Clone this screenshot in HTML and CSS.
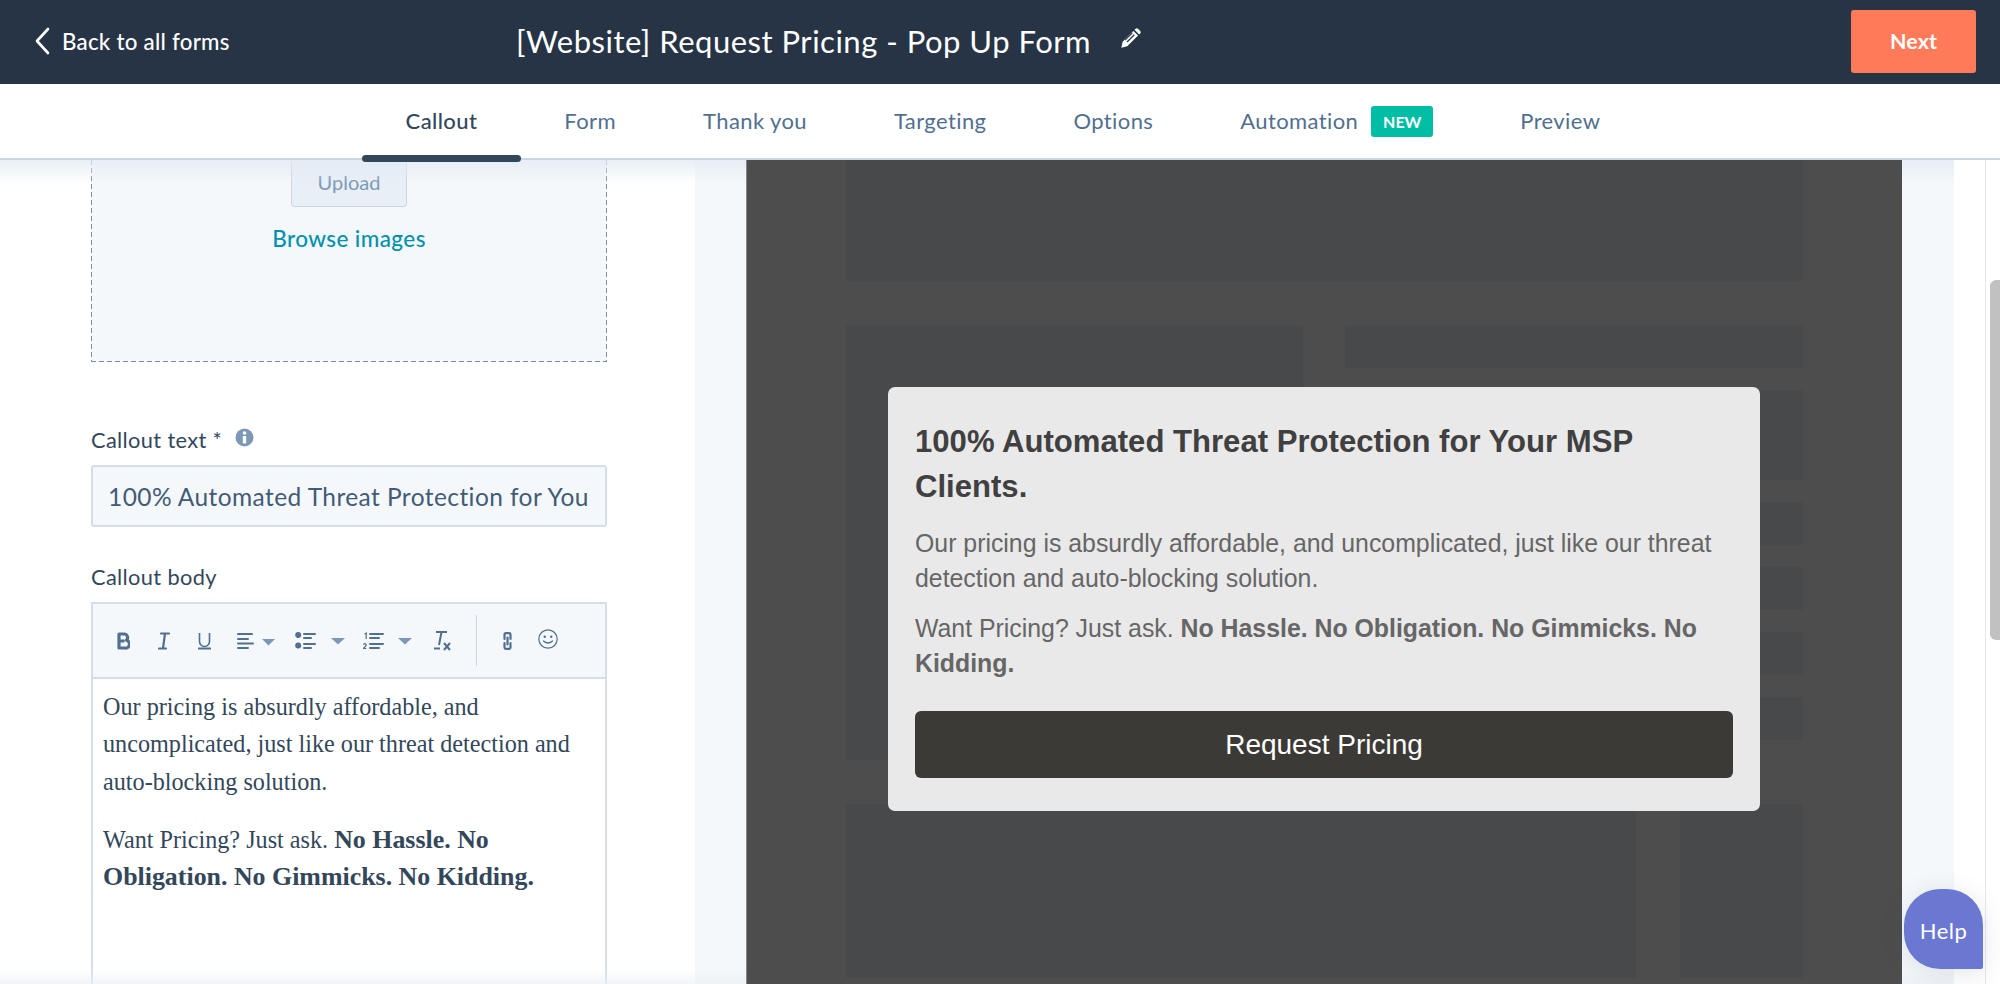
FILE: index.html
```html
<!DOCTYPE html>
<html lang="en">
<head>
<meta charset="utf-8">
<title>Request Pricing - Pop Up Form</title>
<link rel="stylesheet" href="styles.css">
</head>
<body>
<header class="topbar">
  <a class="back">
    <svg class="back-icon" viewBox="0 0 16 28"><path d="M14 2 3 14l11 12" fill="none" stroke="#fff" stroke-width="2.6" stroke-linecap="round" stroke-linejoin="round"/></svg>
    <span>Back to all forms</span>
  </a>
  <div class="title">[Website] Request Pricing - Pop Up Form</div>
  <svg class="pencil" viewBox="0 0 20 20"><path d="M14.2 1.6a1.6 1.6 0 0 1 2.2 0l2 2a1.6 1.6 0 0 1 0 2.2l-1 1-4.2-4.2zM12.2 3.6l4.2 4.2-9.8 9.8-5.4 1.2 1.2-5.4zM5 12.2l6.6-6.6-.8-.8-6.6 6.6zm1.8 1.8 6.6-6.6-.8-.8L6 13.2z" fill="#fff" fill-rule="evenodd"/></svg>
  <button class="next">Next</button>
</header>
<nav class="tabs">
  <a class="tab active">Callout</a>
  <a class="tab">Form</a>
  <a class="tab">Thank you</a>
  <a class="tab">Targeting</a>
  <a class="tab">Options</a>
  <a class="tab">Automation<span class="badge">NEW</span></a>
  <a class="tab">Preview</a>
</nav>
<main class="main">
  <aside class="sidebar">
    <div class="dropzone">
      <div class="upload">Upload</div>
      <a class="browse">Browse images</a>
    </div>
    <label class="label label-text">Callout text *
      <svg class="info" viewBox="0 0 18 18"><circle cx="9" cy="9" r="8.5" fill="#7c98b6"/><circle cx="9" cy="4.8" r="1.7" fill="#fff"/><rect x="7.4" y="7.6" width="3.2" height="7" rx=".6" fill="#fff"/></svg>
    </label>
    <div class="input">100% Automated Threat Protection for You</div>
    <label class="label label-body">Callout body</label>
    <div class="editor">
      <div class="toolbar">
        <svg class="ic w-b" viewBox="0 0 13 18"><path d="M2 2h5a3.6 3.6 0 0 1 2.4 6.3A3.9 3.9 0 0 1 7.6 16H2zM2 9h5.5" fill="none" stroke="#516f90" stroke-width="3.2" stroke-linejoin="round"/></svg>
        <svg class="ic w-i" viewBox="0 0 12 18"><path d="M3 1.5h8M1 16.5h7M7 1.5 5 16.5" fill="none" stroke="#516f90" stroke-width="2.2" stroke-linecap="round"/></svg>
        <svg class="ic w-u" viewBox="0 0 13 18"><path d="M1.5 1v8.5a5 5 0 0 0 10 0V1" fill="none" stroke="#516f90" stroke-width="1.6"/><path d="M.8 16.5h11.4" stroke="#516f90" stroke-width="2.2" stroke-linecap="round"/></svg>
        <svg class="ic w-al" viewBox="0 0 38 18"><path d="M1 2h14M1 7h10M1 11.5h15M1 16h10" stroke="#516f90" stroke-width="2" stroke-linecap="round"/><path d="M25 7h13l-6.500 6.500z" fill="#7c98b6"/></svg>
        <svg class="ic w-bl" viewBox="0 0 50 18"><circle cx="3.200" cy="3" r="3" fill="#516f90"/><circle cx="3.200" cy="13.500" r="3" fill="#516f90"/><path d="M9 2h11M9 6h7M9 12h11M9 16h7" stroke="#516f90" stroke-width="2" stroke-linecap="round"/><path d="M36 6h14l-7 6.500z" fill="#7c98b6"/></svg>
        <svg class="ic w-nl" viewBox="0 0 50 18"><path d="M1.600 2.200 3.200 1v6M.3 12.500q1.200-1.300 2.400-.5.900.8 0 2L.3 16.500h3" fill="none" stroke="#516f90" stroke-width="1.200"/><path d="M7 2h13M7 6h9M7 12h13M7 16h9" stroke="#516f90" stroke-width="2" stroke-linecap="round"/><path d="M35 6h14l-7 6.500z" fill="#7c98b6"/></svg>
        <svg class="ic w-tx" viewBox="0 0 17 22"><path d="M2 2h11M7.500 2 5 15M0 18.500h6M10 13l6 7M16 13l-6 7" fill="none" stroke="#516f90" stroke-width="2"/></svg>
        <span class="divider"></span>
        <svg class="ic w-ln" viewBox="0 0 11 18"><path d="M2.500 7V2.500q0-1.300 1.300-1.300h3.400q1.300 0 1.300 1.300V7M2.500 11v4.500q0 1.300 1.300 1.300h3.400q1.300 0 1.300-1.300V11M5.500 5.500v7" fill="none" stroke="#516f90" stroke-width="2.200" stroke-linecap="round"/></svg>
        <svg class="ic w-sm" viewBox="0 0 20 20"><circle cx="10" cy="10" r="9.200" fill="none" stroke="#516f90" stroke-width="1.200"/><circle cx="6.800" cy="7.800" r="1.200" fill="#516f90"/><circle cx="13.200" cy="7.800" r="1.200" fill="#516f90"/><path d="M5.500 12q4.500 4 9 0" fill="none" stroke="#516f90" stroke-width="1.200" stroke-linecap="round"/></svg>
      </div>
      <div class="editor-body">
        <p>Our pricing is absurdly affordable, and uncomplicated, just like our threat detection and auto-blocking solution.</p>
        <p>Want Pricing? Just ask. <strong>No Hassle. No Obligation. No Gimmicks. No Kidding.</strong></p>
      </div>
    </div>
  </aside>
  <div class="gutter gutter-left"></div>
  <section class="preview">
    <div class="wire wire-top"></div>
    <div class="wire-mid">
      <div class="wire"></div>
      <div class="wire-stack">
        <div class="wire h43"></div>
        <div class="wire h90"></div>
        <div class="wire h43"></div>
        <div class="wire h43"></div>
        <div class="wire h43"></div>
        <div class="wire h43"></div>
      </div>
    </div>
    <div class="wire-bottom">
      <div class="wire"></div>
      <div class="wire"></div>
    </div>
    <div class="popup">
      <h2>100% Automated Threat Protection for Your MSP Clients.</h2>
      <p class="p1">Our pricing is absurdly affordable, and uncomplicated, just like our threat detection and auto-blocking solution.</p>
      <p class="p2">Want Pricing? Just ask. <strong>No Hassle. No Obligation. No Gimmicks. No Kidding.</strong></p>
      <div class="cta">Request Pricing</div>
    </div>
  </section>
  <div class="gutter gutter-right"></div>
  <div class="blank"></div>
  <div class="scrolltrack"><div class="thumb"></div></div>
  <div class="help">Help</div>
</main>
</body>
</html>
```

FILE: styles.css
```css
* { box-sizing: border-box; }
html, body { margin: 0; height: 100%; }
body {
  width: 2000px;
  height: 984px;
  overflow: hidden;
  display: flex;
  flex-direction: column;
  background: #fff;
  color: #33475b;
  font-family: Lato, "Noto Sans", sans-serif;
}
.topbar {
  height: 84px;
  flex: none;
  background: #263445;
  color: #fff;
  display: flex;
  align-items: center;
  padding: 0 0 2px 34px;
}
.back {
  width: 482px;
  display: flex;
  align-items: center;
  font-size: 22.300px;
  font-weight: 500;
  letter-spacing: .25px;
}
.back-icon { width: 16px; height: 28px; margin-right: 12px; }
.title { font-size: 31px; letter-spacing: .5px; white-space: nowrap; }
.pencil { width: 22px; height: 22px; margin: -6px 0 0 29px; }
.next {
  margin-left: auto;
  margin-right: 24px;
  width: 125px;
  height: 63px;
  border: 0;
  border-radius: 3px;
  background: #ff7a59;
  color: #fff;
  font: 700 21.500px Lato, sans-serif;
}
.tabs {
  height: 76px;
  flex: none;
  display: flex;
  justify-content: center;
  align-items: stretch;
  padding-left: 6px;
  border-bottom: 2px solid #cbd6e2;
  position: relative;
  z-index: 3;
  background: #fff;
  font-size: 22px;
  color: #516f90;
}
.tab {
  position: relative;
  display: flex;
  align-items: center;
  padding: 0 43.500px 2px;
  letter-spacing: .4px;
  white-space: nowrap;
}
.tab.active { color: #33475b; font-weight: 500; }
.tab.active::after {
  content: "";
  position: absolute;
  left: 0;
  right: 0;
  bottom: -4px;
  height: 7px;
  border-radius: 4px;
  background: #33475b;
}
.badge {
  margin: 3px 0 0 13px;
  width: 62px;
  height: 31px;
  border-radius: 3px;
  background: #00bda5;
  color: #fff;
  font-size: 16px;
  font-weight: 700;
  letter-spacing: 0;
  display: flex;
  align-items: center;
  justify-content: center;
}
.main {
  flex: 1;
  min-height: 0;
  display: flex;
  position: relative;
}
.main::before {
  content: "";
  position: absolute;
  left: 0;
  right: 0;
  top: 0;
  height: 24px;
  background: linear-gradient(#e3ebf4cc, #e3ebf400);
  z-index: 1;
  pointer-events: none;
}
.main::after {
  content: "";
  position: absolute;
  left: 0;
  right: 0;
  bottom: 0;
  height: 14px;
  background: linear-gradient(#eaf0f600, #eaf0f6aa);
  z-index: 1;
  pointer-events: none;
}
.sidebar {
  width: 695px;
  flex: none;
  padding: 0 88px 0 91px;
  overflow: hidden;
}
.dropzone {
  height: 202px;
  background-color: #f5f8fa;
  background-image:
    repeating-linear-gradient(to bottom, #7c8ea3 0 5px, transparent 5px 8px),
    repeating-linear-gradient(to bottom, #7c8ea3 0 5px, transparent 5px 8px),
    repeating-linear-gradient(to right, #7c8ea3 0 5px, transparent 5px 8px);
  background-size: 1px 100%, 1px 100%, 100% 1px;
  background-position: left top, right top, left bottom;
  background-repeat: no-repeat;
  display: flex;
  flex-direction: column;
  align-items: center;
}
.upload {
  width: 116px;
  height: 47px;
  background: #e8eff7;
  border: 1px solid #cbd6e2;
  border-top: 0;
  border-radius: 0 0 4px 4px;
  color: #7c98b6;
  font-size: 20px;
  display: flex;
  align-items: center;
  justify-content: center;
  padding-bottom: 3px;
}
.browse {
  margin-top: 19px;
  color: #0091ae;
  font-size: 22.500px;
  font-weight: 500;
  line-height: 26px;
  letter-spacing: .4px;
}
.label {
  display: flex;
  align-items: center;
  height: 24px;
  font-size: 21.800px;
  letter-spacing: .35px;
}
.label-text { margin-top: 65px; }
.label-body { margin-top: 37px; }
.info { width: 19px; height: 19px; margin: -4px 0 0 13px; }
.input {
  margin-top: 14px;
  height: 62px;
  background: #f5f8fa;
  border: 2px solid #d5dfe9;
  border-radius: 3px;
  padding: 0 15px;
  display: flex;
  align-items: center;
  color: #425b76;
  font-size: 24.500px;
  letter-spacing: .42px;
  white-space: nowrap;
  overflow: hidden;
}
.editor {
  margin-top: 14px;
  height: 400px;
  border: 2px solid #d5dfe9;
  border-bottom: 0;
}
.toolbar {
  height: 75px;
  background: #f5f8fa;
  border-bottom: 2px solid #d5dfe9;
  display: flex;
  align-items: center;
  padding-left: 24px;
}
.ic { display: block; flex: none; height: 18px; }
.w-b { width: 13px; margin-right: 28px; }
.w-i { width: 12px; margin-right: 28px; }
.w-u { width: 13px; margin-right: 26px; }
.w-al { width: 38px; margin-right: 20px; }
.w-bl { width: 50px; margin-right: 18px; }
.w-nl { width: 50px; margin-right: 21px; }
.w-tx { width: 17px; height: 22px; margin-right: 25px; }
.divider { width: 1px; height: 51px; background: #cbd6e2; margin-right: 25px; }
.w-ln { width: 11px; margin-right: 25px; }
.w-sm { width: 20px; height: 20px; margin-top: -3px; }
.editor-body {
  padding: 9px 10px 0;
  font-family: "Liberation Serif", serif;
  font-size: 24.200px;
  line-height: 37.300px;
}
.editor-body p { margin: 0 0 20.700px; }
.editor-body strong { font-size: 25.900px; }
.gutter { flex: none; background: #f5f8fa; }
.gutter-left { width: 51px; }
.gutter-right { width: 52px; }
.preview {
  width: 1156px;
  flex: none;
  position: relative;
  background: #4d4d4d;
  padding: 0 99px 0 99px;
  border-left: 1px solid #7f8791;
  z-index: 2;
  overflow: hidden;
}
.wire { background: #48494b; }
.wire-top { height: 121px; }
.wire-mid {
  margin-top: 44px;
  height: 435px;
  display: grid;
  grid-template-columns: 457px 458px;
  column-gap: 42px;
}
.wire-stack {
  display: flex;
  flex-direction: column;
  gap: 22px;
}
.h43 { height: 43px; }
.h90 { height: 90px; }
.wire-bottom {
  margin-top: 44px;
  height: 174px;
  display: grid;
  grid-template-columns: 790px 123px;
  column-gap: 44px;
}
.popup {
  position: absolute;
  left: 141px;
  top: 227px;
  width: 872px;
  height: 424px;
  background: #e9e9e9;
  border-radius: 7px;
  padding: 33px 27px 0 27px;
  font-family: "Liberation Sans", Arial, sans-serif;
}
.popup h2 {
  margin: 0;
  font-size: 31.100px;
  line-height: 44.500px;
  color: #404040;
  font-weight: 700;
}
.popup p {
  margin: 0;
  font-size: 24.850px;
  line-height: 35px;
  color: #666;
}
.popup .p1 { margin-top: 17px; }
.popup .p2 { margin-top: 15px; }
.cta {
  margin-top: 30px;
  height: 67px;
  border-radius: 6px;
  background: #3c3a36;
  color: #fff;
  font-size: 28px;
  display: flex;
  align-items: center;
  justify-content: center;
}
.blank { width: 31px; flex: none; background: #fff; position: relative; z-index: 2; }
.scrolltrack {
  flex: 1;
  border-left: 1px solid #e6e8eb;
  padding: 120px 0 0 4px;
  position: relative;
  z-index: 2;
  background: #fff;
}
.thumb {
  height: 360px;
  background: #c1c1c1;
  border-radius: 6px 0 0 6px;
}
.help {
  position: absolute;
  left: 1904px;
  top: 729px;
  width: 79px;
  height: 80px;
  z-index: 4;
  background: #6a78d1;
  border-radius: 36px 36px 2px 36px;
  box-shadow: 0 4px 24px rgba(80, 90, 120, .16);
  color: #fff;
  font-size: 22px;
  letter-spacing: .5px;
  display: flex;
  align-items: center;
  justify-content: center;
  padding-top: 2px;
}
```
